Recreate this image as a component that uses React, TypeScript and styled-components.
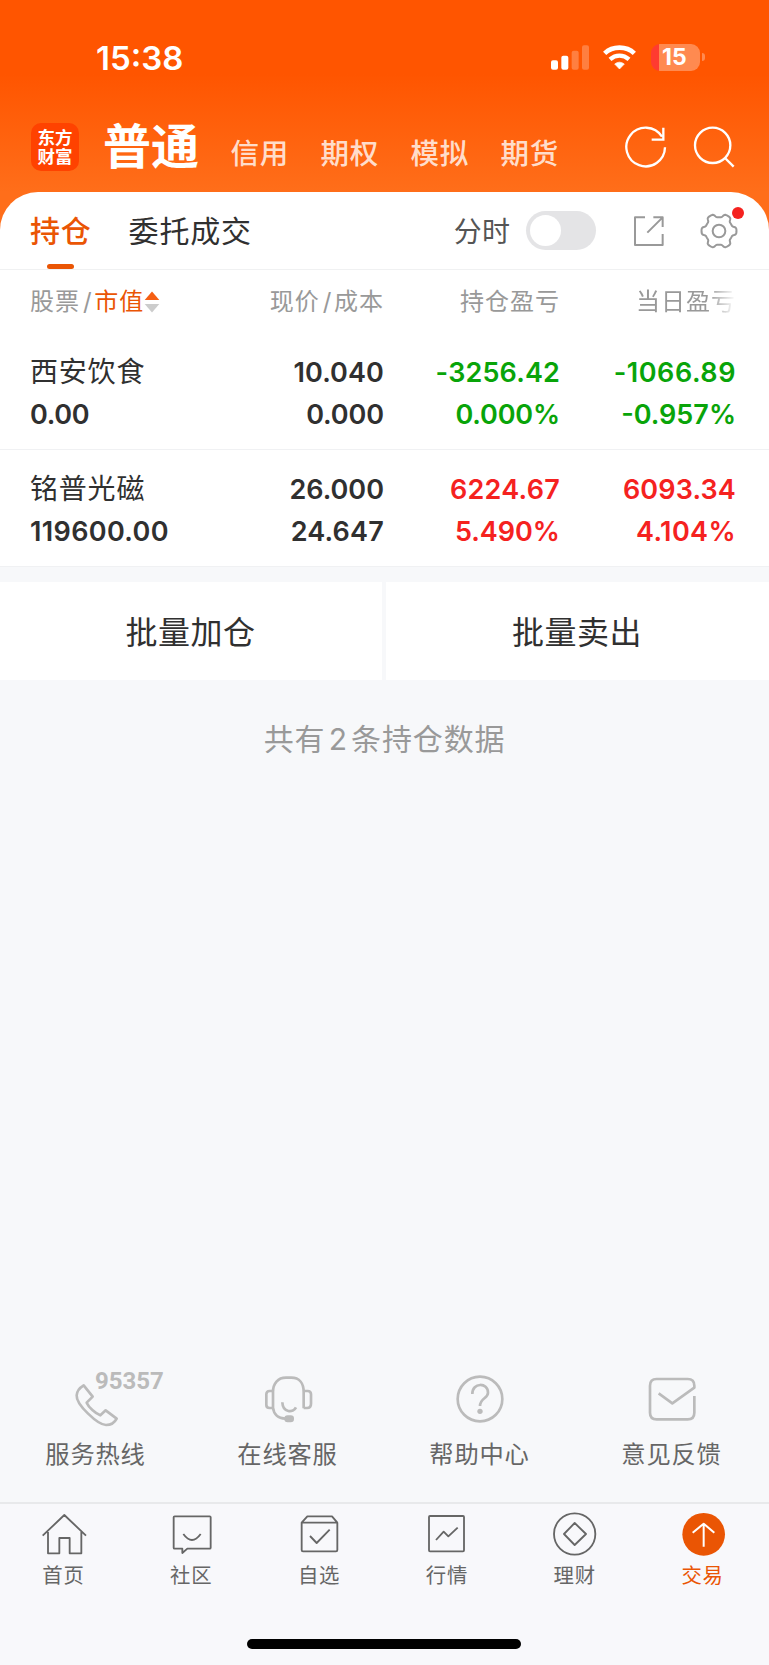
import React from "react";
import styled, { createGlobalStyle, css } from "styled-components";

const Global = createGlobalStyle`
  * { box-sizing: border-box; }
  body {
    margin: 0;
    background: #f7f8fa;
    font-family: Inter, "Noto Sans CJK SC", sans-serif;
    color: #303030;
  }
`;

const Page = styled.div`
  width: 769px;
  height: 1665px;
  display: flex;
  flex-direction: column;
  overflow: hidden;
  background: #f7f8fa;
  white-space: nowrap;
`;

const Top = styled.header`
  height: 240px;
  margin-bottom: -48px;
  flex: none;
  background: linear-gradient(#ff5500 0, #ff5500 74px, #ff6e1a 192px, #ff6e1a 100%);
  color: #fff;
`;

const StatusBar = styled.div`
  height: 110px;
  padding: 4px 64px 0 96px;
  display: flex;
  align-items: center;
  justify-content: space-between;
`;

const Clock = styled.span`
  padding-top: 1px;
  font-size: 33px;
  font-weight: 600;
  line-height: 40px;
`;

const StatusIcons = styled.div`
  display: flex;
  align-items: center;
  gap: 14px;
`;

const Battery = styled.div`
  display: flex;
  align-items: center;
  gap: 2px;
  margin-left: 1px;
`;

const BatteryBody = styled.div`
  width: 49px;
  height: 27px;
  border-radius: 9px;
  display: flex;
  align-items: center;
  padding-left: 11px;
  background: linear-gradient(90deg, #ff3b30 7.5px, #ff8a50 7.5px);
  font-size: 23px;
  font-weight: 700;
  line-height: 27px;
`;

const BatteryTip = styled.div`
  width: 3px;
  height: 8px;
  border-radius: 0 4px 4px 0;
  background: #ff8a50;
`;

const AccountBar = styled.div`
  height: 74px;
  padding: 0 33px 0 31px;
  display: flex;
  align-items: center;
`;

const Logo = styled.div`
  width: 48px;
  height: 48px;
  border-radius: 10px;
  background: #ff4200;
  display: flex;
  flex-direction: column;
  align-items: center;
  justify-content: center;
  font-size: 17.5px;
  line-height: 19px;
  font-weight: 700;
`;

const CurrentAccount = styled.span`
  margin-left: 24px;
  font-size: 48px;
  line-height: 60px;
  font-weight: 700;
`;

const AccountTabs = styled.nav`
  margin: 13px 0 0 31.5px;
  display: flex;
  flex: 1;
`;

const AccountTab = styled.span`
  width: 90px;
  font-size: 28.5px;
  line-height: 36px;
  font-weight: 500;
  letter-spacing: 0.8px;
  color: rgba(255, 255, 255, 0.8);
`;

const HeaderActions = styled.div`
  display: flex;
  gap: 24px;
`;

const Panel = styled.section`
  flex: none;
  background: #fff;
  border-radius: 38px 38px 0 0;
`;

const PanelTabs = styled.div`
  height: 78px;
  padding: 0 31px 0 30px;
  display: flex;
  align-items: center;
  border-bottom: 1px solid #f0f1f2;
`;

const PanelTab = styled.div<{ $active?: boolean }>`
  position: relative;
  height: 77px;
  padding-bottom: 3px;
  display: flex;
  align-items: center;
  font-size: 30px;
  letter-spacing: 0.8px;
  margin-right: 37px;
  ${(p) =>
    p.$active &&
    css`
      color: #ea5504;
      font-weight: 500;
      &::after {
        content: "";
        position: absolute;
        bottom: 0;
        left: 17px;
        width: 27px;
        height: 5px;
        border-radius: 3px;
        background: #ea5504;
      }
    `}
`;

const PanelTools = styled.div`
  margin-left: auto;
  display: flex;
  align-items: center;
`;

const ToggleLabel = styled.span`
  font-size: 28px;
  letter-spacing: 0.4px;
  color: #555;
  margin-right: 15.5px;
  padding-bottom: 2px;
`;

const Toggle = styled.span`
  width: 70px;
  height: 39px;
  padding: 4px;
  border-radius: 20px;
  background: #e4e4e6;
  margin-right: 36px;
`;

const Knob = styled.span`
  display: block;
  width: 31px;
  height: 31px;
  border-radius: 50%;
  background: #fff;
`;

const Settings = styled.span`
  position: relative;
  display: flex;
  margin-left: 34px;
`;

const Dot = styled.span`
  position: absolute;
  right: -6px;
  top: -5px;
  width: 12px;
  height: 12px;
  border-radius: 50%;
  background: #f5221f;
`;

const gridColumns = css`
  display: grid;
  grid-template-columns: 200px 154px 176px 176px;
  padding-left: 30px;
`;

const ColumnHeads = styled.div`
  ${gridColumns}
  height: 63px;
  padding-top: 1px;
  align-items: center;
  font-size: 24px;
  line-height: 36px;
  letter-spacing: 1px;
  color: #999;
`;

const Head = styled.span<{ $right?: boolean; $fade?: boolean }>`
  display: flex;
  align-items: center;
  justify-content: ${(p) => (p.$right ? "flex-end" : "flex-start")};
  ${(p) =>
    p.$fade &&
    css`
      -webkit-mask-image: linear-gradient(90deg, #000 calc(100% - 28px), transparent 100%);
      mask-image: linear-gradient(90deg, #000 calc(100% - 28px), transparent 100%);
    `}
`;

const Slash = styled.span`
  padding: 0 1.5px 0 3px;
`;

const Sorted = styled.span`
  color: #ea5504;
`;

const Holding = styled.div`
  ${gridColumns}
  height: 117px;
  padding-top: 18px;
  border-bottom: 1px solid #f0f1f3;
  align-content: start;
`;

const tones = { plain: "#303030", down: "#09a409", up: "#f5221f" };

const Stack = styled.div<{ $tone?: keyof typeof tones; $right?: boolean }>`
  color: ${(p) => tones[p.$tone ?? "plain"]};
  text-align: ${(p) => (p.$right ? "right" : "left")};
`;

const StockName = styled.div`
  height: 42px;
  font-size: 28px;
  line-height: 43px;
  letter-spacing: 0.8px;
`;

const Figure = styled.div<{ $track?: number }>`
  height: 42px;
  font-size: 27px;
  line-height: 43px;
  font-weight: 600;
  letter-spacing: ${(p) => p.$track ?? 0}px;
`;

const BatchActions = styled.div`
  margin-top: 15px;
  display: grid;
  grid-template-columns: 382px 383px;
  gap: 4px;
`;

const BatchButton = styled.button`
  height: 98px;
  border: 0;
  padding: 0 1px 3px 0;
  background: #fff;
  font: inherit;
  font-size: 32px;
  letter-spacing: 0.5px;
  color: #303030;
`;

const Summary = styled.p`
  margin: 37px 0 0;
  text-align: center;
  font-size: 30px;
  line-height: 44px;
  letter-spacing: 0.85px;
  word-spacing: -6px;
  color: #999;
`;

const Services = styled.div`
  margin-top: auto;
  height: 132px;
  display: grid;
  grid-template-columns: repeat(4, 192px);
`;

const Service = styled.div`
  display: flex;
  flex-direction: column;
  align-items: center;
  gap: 8px;
  font-size: 24.3px;
  line-height: 36px;
  letter-spacing: 0.8px;
  color: #666;
`;

const Caption = styled.span`
  padding-right: 1px;
`;

const ServiceIcon = styled.span`
  position: relative;
  display: flex;
  color: #bbb;
`;

const Hotline = styled.span`
  position: absolute;
  left: 27px;
  top: -3px;
  font-family: Roboto, sans-serif;
  font-size: 24px;
  line-height: 28px;
  font-weight: 700;
  letter-spacing: 0;
`;

const TabBar = styled.nav`
  height: 133px;
  padding: 6px 2px 0 0;
  border-top: 2px solid #e8e9eb;
  background: #f8f8fb;
  display: grid;
  grid-template-columns: repeat(6, 1fr);
  align-items: start;
`;

const TabItem = styled.div<{ $active?: boolean }>`
  display: flex;
  flex-direction: column;
  align-items: center;
  font-size: 20.4px;
  line-height: 30px;
  letter-spacing: 0.8px;
  gap: 3px;
  color: ${(p) => (p.$active ? "#ea5504" : "#666")};
`;

const HomeArea = styled.div`
  height: 30px;
  padding: 4px 1px 0 0;
  background: #f8f8fb;
`;

const HomeIndicator = styled.div`
  width: 274px;
  height: 10px;
  margin: 0 auto;
  border-radius: 5px;
  background: #000;
`;

const Line = styled.svg`
  display: block;
  flex: none;
  fill: none;
  stroke: currentColor;
  stroke-linejoin: round;
`;

/* Six flat-topped teeth around the hub, one every 60 degrees. */
const gearPath = (() => {
  const points: string[] = [];
  for (let i = 0; i < 120; i++) {
    const a = (i / 120) * Math.PI * 2;
    const r = 47 + 5.5 * Math.tanh(2.6 * Math.cos(6 * a));
    points.push(`${(57 + r * Math.cos(a)).toFixed(2)} ${(57 + r * Math.sin(a)).toFixed(2)}`);
  }
  return `M${points.join("L")}Z`;
})();

const ServiceSvg = ({ children }: { children: React.ReactNode }) => (
  <Line width="56" height="58" viewBox="0 0 168 174" strokeWidth="8">
    {children}
  </Line>
);

const TabSvg = ({ children }: { children: React.ReactNode }) => (
  <Line width="48" height="48" viewBox="0 0 144 144" strokeWidth="5.5">
    {children}
  </Line>
);

const services = [
  {
    label: "服务热线",
    note: "95357",
    icon: (
      <path d="M47 46L74 80L56 98C62 112 82 130 97 136L113 121L146 146C140 158 127 165 114 165C90 165 24 104 26 76C27 62 37 52 47 46Z" />
    ),
  },
  {
    label: "在线客服",
    icon: (
      <>
        <path d="M39 113V66C39 40 54 23 78 23H94C118 23 131 40 131 66V115M39 113C41 132 54 145 76 146" />
        <path d="M39 63H29Q19 63 19 73V105Q19 114 29 114H39M131 63H143Q153 63 153 73V101Q153 114 141 114H131" />
        <path d="M67 97C68 129 100 129 108 112" />
        <rect x="73" y="136" width="29" height="21" rx="10" fill="currentColor" stroke="none" />
      </>
    ),
  },
  {
    label: "帮助中心",
    icon: (
      <>
        <circle cx="84" cy="87" r="67" />
        <path d="M61 72C61 36 108 37 108 68C108 86 84 84 84 108" />
        <circle cx="84" cy="124" r="8" fill="currentColor" stroke="none" />
      </>
    ),
  },
  {
    label: "意见反馈",
    icon: (
      <path d="M151 78V128Q151 148 131 148H38Q18 148 18 128V47Q18 27 38 27H131Q151 27 151 47V53L85 100L44 70" />
    ),
  },
];

const tabs = [
  { label: "首页", icon: <path d="M8 77L73 15L138 77M24 66V130H58V84H89V130H124V66" /> },
  {
    label: "社区",
    icon: <path d="M20 19H125Q128 19 128 22V113Q128 116 125 116H58L43 129V116H20Q17 116 17 113V22Q17 19 20 19ZM46 72Q72 108 98 72" />,
  },
  {
    label: "自选",
    icon: <path d="M17 38H124V120Q124 124 120 124H21Q17 124 17 120V38L34 19H108L124 38M42 78L62 99L101 59" />,
  },
  {
    label: "行情",
    icon: (
      <>
        <rect x="18" y="18" width="105" height="106" rx="3" />
        <path d="M39 90L62 65L76 79L104 53" />
      </>
    ),
  },
  {
    label: "理财",
    icon: (
      <>
        <circle cx="71" cy="72" r="62" />
        <path d="M39 72L71 39L105 72L71 105Z" />
      </>
    ),
  },
  {
    label: "交易",
    active: true,
    icon: (
      <>
        <circle cx="74" cy="73" r="64" fill="#ea5504" stroke="none" />
        <path d="M41 68L74 41L106 68M74 41V110" stroke="#fff" strokeWidth="6" />
      </>
    ),
  },
];

type Tone = "up" | "down";
type Cell = { text: string; track?: number };

const holdings: { name: string; value: Cell; price: Cell[]; total: Cell[]; day: Cell[]; tone: Tone }[] = [
  {
    name: "西安饮食",
    value: { text: "0.00", track: -0.3 },
    price: [{ text: "10.040", track: 0.1 }, { text: "0.000", track: -0.1 }],
    total: [{ text: "-3256.42", track: 0.15 }, { text: "0.000%", track: -0.15 }],
    day: [{ text: "-1066.89", track: 0.55 }, { text: "-0.957%" }],
    tone: "down",
  },
  {
    name: "铭普光磁",
    value: { text: "119600.00", track: 0.35 },
    price: [{ text: "26.000" }, { text: "24.647", track: 0.2 }],
    total: [{ text: "6224.67", track: 0.25 }, { text: "5.490%" }],
    day: [{ text: "6093.34", track: 0.15 }, { text: "4.104%", track: 0.4 }],
    tone: "up",
  },
];

const Figures = ({ cells }: { cells: Cell[] }) => (
  <>
    {cells.map((c) => (
      <Figure key={c.text} $track={c.track}>
        {c.text}
      </Figure>
    ))}
  </>
);

export default function App() {
  return (
    <Page>
      <Global />
      <Top>
        <StatusBar>
          <Clock>15:38</Clock>
          <StatusIcons>
            <svg width="38" height="25" viewBox="0 0 114 75" fill="#fff">
              <rect x="0" y="46" width="21" height="28" rx="6" />
              <rect x="31" y="32" width="21" height="42" rx="6" />
              <rect x="62" y="17" width="21" height="57" rx="6" opacity="0.25" />
              <rect x="93" y="1" width="21" height="73" rx="6" opacity="0.25" />
            </svg>
            <svg width="33" height="25" viewBox="0 0 99 75" fill="none" stroke="#fff" strokeWidth="14">
              <path d="M5 25C29 2 70 2 94 25" />
              <path d="M21 43C38 28 61 28 78 43" strokeWidth="13" />
              <path d="M35 57Q49 46 64 57L49.500 72Z" fill="#fff" stroke="#fff" strokeWidth="2" strokeLinejoin="round" />
            </svg>
            <Battery>
              <BatteryBody>15</BatteryBody>
              <BatteryTip />
            </Battery>
          </StatusIcons>
        </StatusBar>
        <AccountBar>
          <Logo>
            <span>东方</span>
            <span>财富</span>
          </Logo>
          <CurrentAccount>普通</CurrentAccount>
          <AccountTabs>
            {["信用", "期权", "模拟", "期货"].map((t) => (
              <AccountTab key={t}>{t}</AccountTab>
            ))}
          </AccountTabs>
          <HeaderActions>
            <Line width="44" height="44" viewBox="0 0 132 132" strokeWidth="7">
              <path d="M123 67A58 58 0 1 1 114 35M118 8V44H83" strokeLinejoin="miter" />
            </Line>
            <Line width="44" height="44" viewBox="0 0 132 132" strokeWidth="7">
              <circle cx="62" cy="61" r="53" />
              <path d="M99 99L125 125" />
            </Line>
          </HeaderActions>
        </AccountBar>
      </Top>
      <Panel>
        <PanelTabs>
          <PanelTab $active>持仓</PanelTab>
          <PanelTab>委托成交</PanelTab>
          <PanelTools>
            <ToggleLabel>分时</ToggleLabel>
            <Toggle>
              <Knob />
            </Toggle>
            <Line width="34" height="34" viewBox="0 0 102 102" strokeWidth="6" color="#999">
              <path d="M39 10H9V93H92V60M64 10H92V39M92 10L46 56" />
            </Line>
            <Settings>
              <Line width="38" height="38" viewBox="0 0 114 114" strokeWidth="6" color="#999">
                <path d={gearPath} />
                <circle cx="57" cy="57" r="19" />
              </Line>
              <Dot />
            </Settings>
          </PanelTools>
        </PanelTabs>
        <ColumnHeads>
          <Head>
            股票<Slash>/</Slash>
            <Sorted>市值</Sorted>
            <svg width="16" height="22" viewBox="0 0 16 22">
              <path d="M8 0.500L15.300 9H0.700Z" fill="#f55f14" />
              <path d="M8 21.500L15.300 13H0.700Z" fill="#ccc" />
            </svg>
          </Head>
          <Head $right>
            现价<Slash>/</Slash>成本
          </Head>
          <Head $right>持仓盈亏</Head>
          <Head $right $fade>
            当日盈亏
          </Head>
        </ColumnHeads>
        {holdings.map((h) => (
          <Holding key={h.name}>
            <Stack>
              <StockName>{h.name}</StockName>
              <Figures cells={[h.value]} />
            </Stack>
            <Stack $right>
              <Figures cells={h.price} />
            </Stack>
            <Stack $right $tone={h.tone}>
              <Figures cells={h.total} />
            </Stack>
            <Stack $right $tone={h.tone}>
              <Figures cells={h.day} />
            </Stack>
          </Holding>
        ))}
      </Panel>
      <BatchActions>
        <BatchButton>批量加仓</BatchButton>
        <BatchButton>批量卖出</BatchButton>
      </BatchActions>
      <Summary>共有 2 条持仓数据</Summary>
      <Services>
        {services.map((s) => (
          <Service key={s.label}>
            <ServiceIcon>
              <ServiceSvg>{s.icon}</ServiceSvg>
              {s.note && <Hotline>{s.note}</Hotline>}
            </ServiceIcon>
            <Caption>{s.label}</Caption>
          </Service>
        ))}
      </Services>
      <TabBar>
        {tabs.map((t) => (
          <TabItem key={t.label} $active={t.active}>
            <TabSvg>{t.icon}</TabSvg>
            <Caption>{t.label}</Caption>
          </TabItem>
        ))}
      </TabBar>
      <HomeArea>
        <HomeIndicator />
      </HomeArea>
    </Page>
  );
}
